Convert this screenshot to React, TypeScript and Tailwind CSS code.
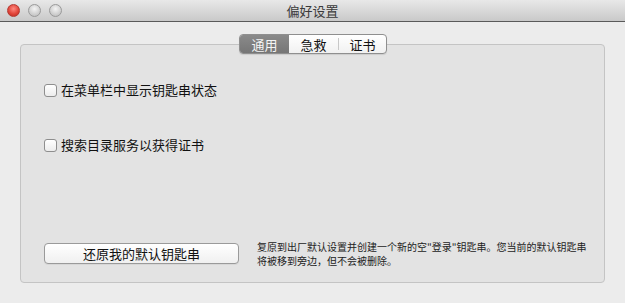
export default function App() {
  const font = { fontFamily: '"Noto Sans CJK SC", "Liberation Sans", sans-serif' };
  return (
    <div
      className="w-[625px] h-[303px] bg-[#ececec] flex flex-col overflow-hidden text-[#111]"
      style={font}
    >
      {/* Title bar */}
      <div className="relative h-[22px] shrink-0 bg-gradient-to-b from-[#e8e8e8] to-[#c9c9c9] border-b border-[#5a5a5a] flex items-center justify-center">
        <div className="absolute left-[7px] top-[4px] flex gap-[8px]">
          <span className="w-[13px] h-[13px] rounded-full border border-[#b43a32] bg-[radial-gradient(circle_at_50%_35%,#ff8a80,#e2473c_55%,#b8281e)]" />
          <span className="w-[13px] h-[13px] rounded-full border border-[#9a9a9a] bg-[radial-gradient(circle_at_50%_35%,#f4f4f4,#cfcfcf_60%,#b8b8b8)]" />
          <span className="w-[13px] h-[13px] rounded-full border border-[#9a9a9a] bg-[radial-gradient(circle_at_50%_35%,#f4f4f4,#cfcfcf_60%,#b8b8b8)]" />
        </div>
        <span className="text-[13px] text-[#3a3a3a] leading-none">偏好设置</span>
      </div>

      {/* Content */}
      <div className="relative flex-1 px-[20px] pt-[22px] pb-[20px]">
        <div className="h-full rounded-[4px] border border-[#c4c4c4] bg-[#e3e3e3] flex flex-col px-[23px] pt-[35px] pb-[14px]">
          <label className="flex items-center gap-[4px] h-[20px] text-[13px]">
            <span className="w-[13px] h-[13px] rounded-[3px] border border-[#8e8e8e] bg-gradient-to-b from-white to-[#ececec]" />
            <span>在菜单栏中显示钥匙串状态</span>
          </label>
          <label className="flex items-center gap-[4px] h-[20px] text-[13px] mt-[35px]">
            <span className="w-[13px] h-[13px] rounded-[3px] border border-[#8e8e8e] bg-gradient-to-b from-white to-[#ececec]" />
            <span>搜索目录服务以获得证书</span>
          </label>
          <div className="mt-auto flex items-start">
            <button className="shrink-0 mt-[3px] w-[195px] h-[21px] rounded-[4px] border border-[#9a9a9a] bg-gradient-to-b from-white to-[#f0f0f0] text-[13px] leading-none shadow-[0_1px_0_rgba(0,0,0,0.05)]">
              还原我的默认钥匙串
            </button>
            <p className="shrink-0 ml-[18px] text-[10px] leading-[14px] text-[#222] whitespace-nowrap">
              复原到出厂默认设置并创建一个新的空"登录"钥匙串。您当前的默认钥匙串
              <br />
              将被移到旁边，但不会被删除。
            </p>
          </div>
        </div>

        {/* Tabs */}
        <div className="absolute left-[239px] top-[12px] flex h-[20px] rounded-[4px] border border-[#8f8f8f] bg-gradient-to-b from-white to-[#f1f1f1] overflow-hidden text-[13px] leading-none shadow-[0_1px_1px_rgba(0,0,0,0.1)]">
          <span className="w-[49px] flex items-center justify-center bg-gradient-to-b from-[#8a8a8a] to-[#767676] text-[#f4f4f4]">通用</span>
          <span className="w-[49px] flex items-center justify-center">急救</span>
          <span className="w-px my-[3px] bg-[#c8c8c8]" />
          <span className="w-[47px] flex items-center justify-center">证书</span>
        </div>
      </div>
    </div>
  );
}
